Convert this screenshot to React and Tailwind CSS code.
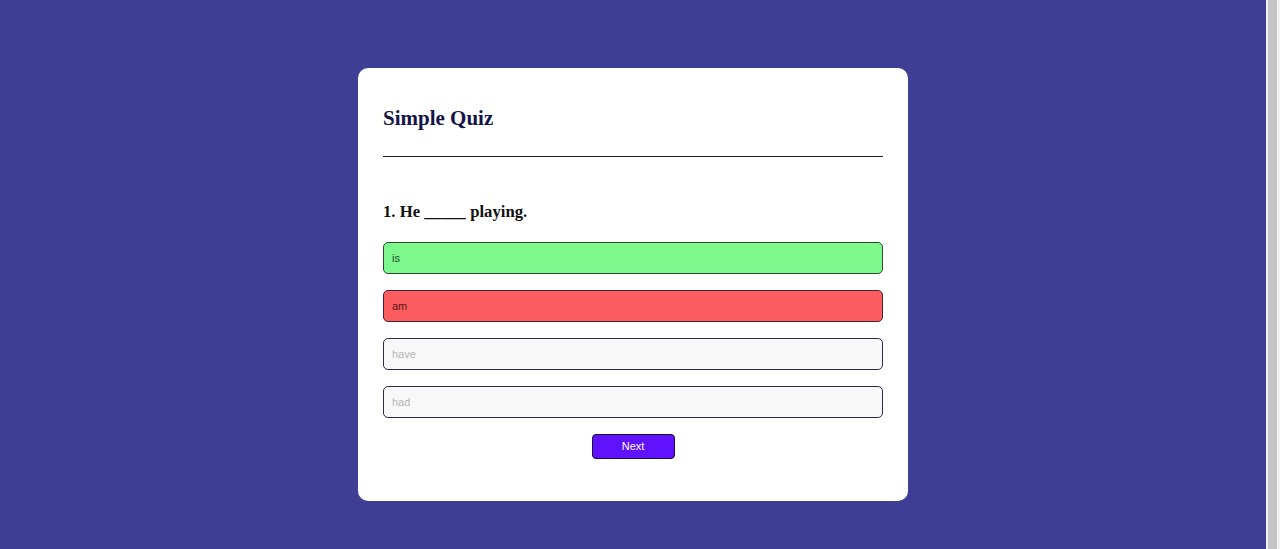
export default function App() {
  const options = [
    { label: "is", cls: "bg-[#7cf88d] text-[#1f4a26] border-[#2b4a30]" },
    { label: "am", cls: "bg-[#fb5d61] text-[#5a1414] border-[#4a2028]" },
    { label: "have", cls: "bg-[#f8f8f8] text-[#b4b4b4] border-[#2a2a4a]" },
    { label: "had", cls: "bg-[#f8f8f8] text-[#b4b4b4] border-[#2a2a4a]" },
  ];
  return (
    <div className="flex h-[549px] w-full bg-[#3e3e94] overflow-hidden">
      <div className="flex-1 flex justify-center pt-[68px]">
        <div className="w-[550px] h-[433px] bg-white rounded-[10px] px-[25px] pt-[38px] pb-[42px] flex flex-col">
          <h1
            className="text-[21px] leading-[24px] font-bold text-[#141446] pb-[26px] border-b border-[#222]"
            style={{ fontFamily: '"Liberation Serif", "Times New Roman", serif' }}
          >
            Simple Quiz
          </h1>
          <h2
            className="mt-[44px] text-[16.7px] leading-[21px] font-bold text-[#111]"
            style={{ fontFamily: '"Liberation Serif", "Times New Roman", serif' }}
          >
            1. He _____ playing.
          </h2>
          <div className="mt-[20px] flex flex-col gap-[16px]">
            {options.map((o) => (
              <div
                key={o.label}
                className={`h-[32px] rounded-[5px] border px-[8px] flex items-center text-[11px] ${o.cls}`}
                style={{ fontFamily: '"Liberation Sans", Arial, sans-serif' }}
              >
                {o.label}
              </div>
            ))}
          </div>
          <div className="mt-[16px] flex justify-center">
            <button
              className="w-[83px] h-[25px] rounded-[4px] bg-[#5f12fb] border border-[#1a0a40] text-white text-[11px] flex items-center justify-center"
              style={{ fontFamily: '"Liberation Sans", Arial, sans-serif' }}
            >
              Next
            </button>
          </div>
        </div>
      </div>
      <div className="w-[14px] h-full bg-[#f1f1f1] flex">
        <div className="ml-[2px] w-[9px] h-full bg-[#c4c4c4]" />
      </div>
    </div>
  );
}
